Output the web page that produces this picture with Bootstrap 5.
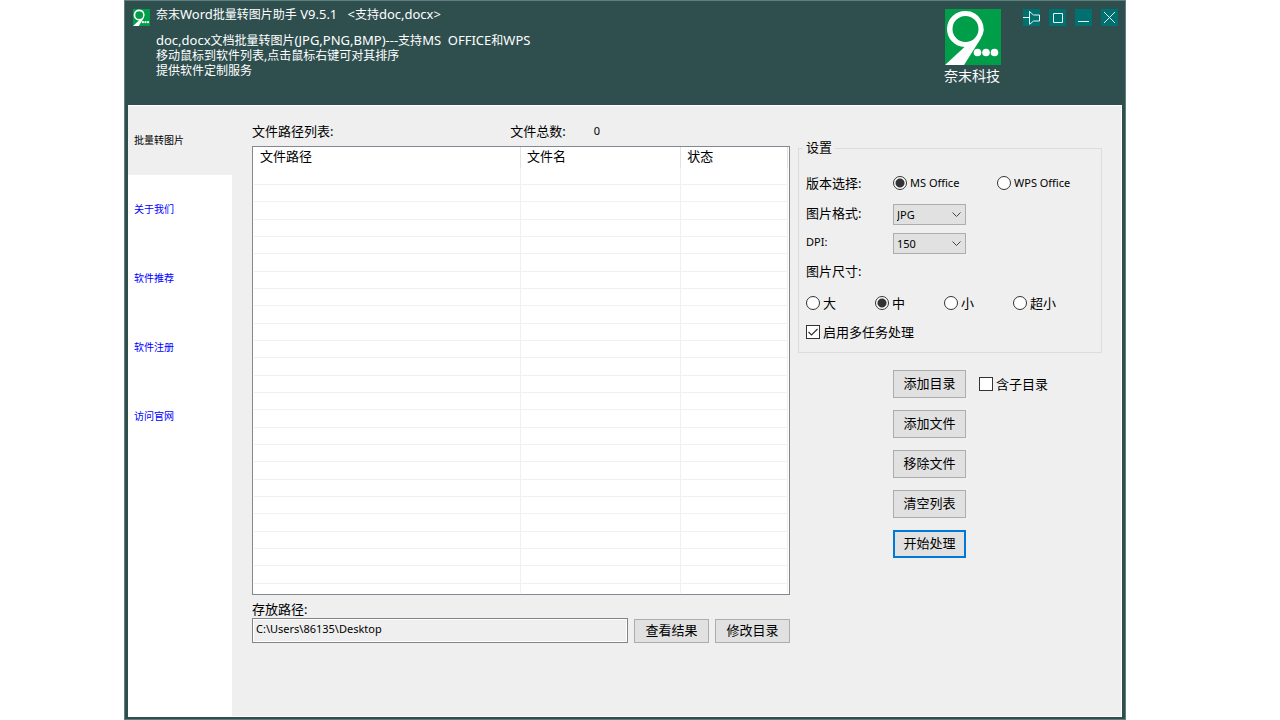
<!DOCTYPE html>
<html lang="zh-CN">
<head>
<meta charset="utf-8">
<meta name="viewport" content="width=device-width, initial-scale=1">
<title>奈末Word批量转图片助手</title>
<link href="https://cdn.jsdelivr.net/npm/bootstrap@5.3.0/dist/css/bootstrap.min.css" rel="stylesheet">
<style>
:root { --frame: #2f4f4f; --panel: #efefef; --line: #f0f0f0; --edge: #adadad; }
body { font: 13px/18px "Noto Sans", "Noto Sans CJK SC", sans-serif; color: #000; background: #fff; padding: 0 154px 0 124px; }
.app-window { background: var(--frame); border: 1px solid #5f7f7f; padding: 0 3px 2px; }
.app-head { height: 104px; color: #fff; padding: 5px 4px 0 5px; }
.app-title { font-size: 12px; line-height: 18px; font-weight: 400; white-space: pre; }
.app-intro { font-size: 12px; line-height: 15px; white-space: pre; padding-top: 9px; }
.latin { font-size: 13px; line-height: 15px; }
.app-icon { width: 17px; height: 17px; margin: 3px 6px 0 0; }
.brand { width: 64px; margin-right: 18px; padding-top: 3px; }
.brand-name { font-size: 14px; line-height: 20px; padding-top: 1px; margin-left: -2px; }
.win-tools { gap: 9px; padding-top: 3px; }
.win-btn { width: 17px; height: 17px; background: #007070; border: 0; padding: 0; display: block; }
.win-btn svg { display: block; overflow: visible; fill: none; stroke: #e8f4f4; }
.app-body { background: var(--panel); border: 1px solid #fff; border-left: 0; }
.side { width: 104px; background: #fff; font-size: 10px; }
.side a { height: 69px; padding: 0 6px 2px; color: #00f; text-decoration: none; display: flex; align-items: center; }
.side a.active { color: #000; background: var(--panel); }
.work { padding: 16px 19px 0 20px; gap: 8px; }
.list-cap { height: 24px; }
.cap-left { flex: 0 0 48%; }
.count { padding-left: 28px; }
.file-box { height: 449px; background: #fff; border: 1px solid #828790; padding: 0 1px; overflow: hidden; }
.file-table { width: 100%; table-layout: fixed; border-collapse: separate; border-spacing: 0; }
.file-table th { height: 21px; font-weight: 400; padding: 0 6px 2px; line-height: 19px; border-right: 1px solid #e2e2e2; }
.file-table td { height: 17px; padding: 0; border-right: 1px solid var(--line); border-bottom: 1px solid var(--line); }
.file-table tr:nth-child(3n) td { height: 18px; }
.file-table tr:last-child td { height: 9px; border-bottom: 0; }
.c-path { width: 50%; } .c-name { width: 30%; }
.small-type { font-size: 11px; }
.flat-btn { height: 28px; width: 73px; padding: 0 0 2px; border: 1px solid var(--edge); border-radius: 0; background: #e1e1e1; color: #000; font-size: 13px; line-height: 18px; }
.flat-btn:hover { background: #e5f1fb; border-color: #0078d7; color: #000; }
.flat-btn.go { border: 2px solid #0078d7; }
.wide-btn { width: 75px; height: 24px; }
.out-label { padding-top: 5px; }
.out-row { gap: 6px; }
.path-input { height: 25px; border: 1px solid #7f8488; outline: 1px solid #fff; outline-offset: -2px; border-radius: 0; background: var(--panel); padding: 0 3px 4px; color: #000; font-size: 11px; }
.options { width: 304px; padding-top: 16px; }
.opt-group { border: 1px solid #dcdcdc; padding: 0 7px; height: 215px; }
.opt-group legend { float: none; width: auto; font-size: 13px; line-height: 18px; margin: 0 0 0 -3px; padding: 0 3px 2px; }
.opt-row { height: 29px; display: flex; align-items: center; }
.opt-row.first-row { height: 42px; padding-top: 8px; }
.opt-row.dim-row { height: 32px; }
.opt-row.last-row { height: 25px; }
.opt-name { width: 87px; padding-bottom: 4px; }
.tick { appearance: none; flex: none; width: 14px; height: 14px; margin: 0 3px 0 0; background: #fff; border: 1px solid #333; }
.tick.dot { border-radius: 50%; }
.tick.dot:checked { background: radial-gradient(circle, #333 0 4px, #fff 5px); }
.tick.box:checked { background: #fff url("data:image/svg+xml,%3Csvg xmlns='http://www.w3.org/2000/svg' viewBox='0 0 12 12'%3E%3Cpath d='M1.5 6l3 3L10.500 3' fill='none' stroke='%23333' stroke-width='1.2'/%3E%3C/svg%3E"); }
.choice { display: flex; align-items: center; }
.choice.ver { width: 104px; }
.choice.dim { width: 69px; }
.drop { width: 73px; height: 21px; border: 1px solid var(--edge); border-radius: 0; background-color: #e1e1e1; color: #000; font-size: 11px; line-height: 15px; padding: 2px 16px 2px 3px; background-position: right 3px center; background-size: 11px 11px; background-image: url("data:image/svg+xml,%3Csvg xmlns='http://www.w3.org/2000/svg' viewBox='0 0 11 11'%3E%3Cpath d='M1.500 3.500l4 4 4-4' fill='none' stroke='%23444'/%3E%3C/svg%3E"); }
.actions { gap: 12px; padding: 17px 0 0 95px; }
.with-sub { gap: 13px; }
</style>
</head>
<body>
<svg class="d-none" xmlns="http://www.w3.org/2000/svg">
  <symbol id="logo" viewBox="0 0 56 56">
    <rect width="56" height="56" fill="#009e49"/>
    <path fill="#fff" fill-rule="evenodd" d="M20.500 2a18 18 0 0 0-1 36L0 56h19L35.500 30A18 18 0 0 0 20.500 2zm0 5a13 13 0 1 1 0 26 13 13 0 0 1 0-26z"/>
    <circle cx="32.500" cy="43.500" r="3.800" fill="#fff"/><circle cx="41" cy="43.500" r="3.800" fill="#fff"/><circle cx="49.500" cy="43.500" r="3.800" fill="#fff"/>
  </symbol>
</svg>
<div class="app-window min-vh-100 d-flex flex-column">
  <header class="app-head d-flex">
    <svg class="app-icon flex-shrink-0"><use href="#logo"/></svg>
    <div class="flex-grow-1">
      <h1 class="app-title m-0">奈末<span class="latin">Word</span>批量转图片助手<span class="latin"> V9.5.1   &lt;</span>支持<span class="latin">doc,docx&gt;</span></h1>
      <p class="app-intro m-0"><span class="latin">doc,docx</span>文档批量转图片<span class="latin">(JPG,PNG,BMP)---</span>支持<span class="latin">MS  OFFICE</span>和<span class="latin">WPS</span>
移动鼠标到软件列表,点击鼠标右键可对其排序
提供软件定制服务</p>
    </div>
    <div class="brand text-center">
      <svg width="56" height="56" class="d-block mx-auto"><use href="#logo"/></svg>
      <div class="brand-name">奈末科技</div>
    </div>
    <div class="win-tools d-flex align-items-start">
      <button class="win-btn" type="button" aria-label="置顶"><svg width="17" height="17"><path d="M0 8.500h6M6.500 2v13M6.500 2.500l4 3.500h6v6h-6l-4 3.500"/></svg></button>
      <button class="win-btn" type="button" aria-label="最大化"><svg width="17" height="17"><path d="M4.500 4.500h9v9h-9z"/></svg></button>
      <button class="win-btn" type="button" aria-label="最小化"><svg width="17" height="17"><path d="M3 12.500h11"/></svg></button>
      <button class="win-btn" type="button" aria-label="关闭"><svg width="17" height="17"><path d="M3 3l11 11M14 3L3 14"/></svg></button>
    </div>
  </header>
  <div class="app-body d-flex flex-grow-1">
    <nav class="side flex-shrink-0">
      <a href="#convert" class="active">批量转图片</a>
      <a href="#about">关于我们</a>
      <a href="#more">软件推荐</a>
      <a href="#register">软件注册</a>
      <a href="#site">访问官网</a>
    </nav>
    <main class="work d-flex flex-grow-1">
      <section class="flex-grow-1">
        <div class="list-cap d-flex">
          <span class="cap-left">文件路径列表:</span><span>文件总数:</span><span class="small-type count">0</span>
        </div>
        <div class="file-box">
          <table class="file-table">
            <colgroup><col class="c-path"><col class="c-name"><col></colgroup>
            <thead><tr><th>文件路径</th><th>文件名</th><th>状态</th></tr></thead>
            <tbody id="rows"></tbody>
          </table>
        </div>
        <label for="out" class="d-block out-label">存放路径:</label>
        <div class="d-flex align-items-center out-row">
          <input id="out" class="path-input flex-grow-1" value="C:\Users\86135\Desktop" readonly>
          <button class="btn flat-btn wide-btn" type="button">查看结果</button>
          <button class="btn flat-btn wide-btn" type="button">修改目录</button>
        </div>
      </section>
      <section class="options flex-shrink-0">
        <fieldset class="opt-group">
          <legend>设置</legend>
          <div class="opt-row first-row"><span class="opt-name pb-0">版本选择:</span>
            <label class="choice ver small-type"><input class="tick dot" type="radio" name="ver" checked>MS Office</label>
            <label class="choice small-type"><input class="tick dot" type="radio" name="ver">WPS Office</label></div>
          <div class="opt-row"><label class="opt-name" for="fmt">图片格式:</label>
            <select class="form-select drop" id="fmt"><option>JPG</option><option>PNG</option><option>BMP</option></select></div>
          <div class="opt-row"><label class="opt-name small-type" for="dpi">DPI:</label>
            <select class="form-select drop" id="dpi"><option>150</option><option>300</option></select></div>
          <div class="opt-row"><span class="opt-name">图片尺寸:</span></div>
          <div class="opt-row dim-row">
            <label class="choice dim"><input class="tick dot" type="radio" name="dim">大</label>
            <label class="choice dim"><input class="tick dot" type="radio" name="dim" checked>中</label>
            <label class="choice dim"><input class="tick dot" type="radio" name="dim">小</label>
            <label class="choice"><input class="tick dot" type="radio" name="dim">超小</label></div>
          <div class="opt-row last-row"><label class="choice"><input class="tick box" type="checkbox" checked>启用多任务处理</label></div>
        </fieldset>
        <div class="actions d-flex flex-column">
          <div class="d-flex align-items-center with-sub"><button class="btn flat-btn" type="button">添加目录</button>
            <label class="choice"><input class="tick box" type="checkbox">含子目录</label></div>
          <button class="btn flat-btn" type="button">添加文件</button>
          <button class="btn flat-btn" type="button">移除文件</button>
          <button class="btn flat-btn" type="button">清空列表</button>
          <button class="btn flat-btn go" type="button">开始处理</button>
        </div>
      </section>
    </main>
  </div>
</div>
<script src="https://cdn.jsdelivr.net/npm/bootstrap@5.3.0/dist/js/bootstrap.bundle.min.js"></script>
<script>
document.getElementById('rows').innerHTML = '<tr><td></td><td></td><td></td></tr>'.repeat(25);
</script>
</body>
</html>
